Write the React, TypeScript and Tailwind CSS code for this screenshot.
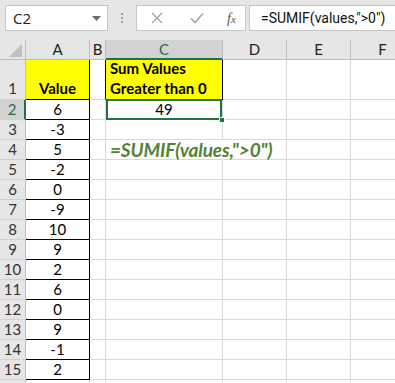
import React from "react";

const GRID = "border-[#d9d9d9]";

function XIcon() {
  return (
    <svg width="12" height="12" viewBox="0 0 12 12">
      <path d="M1 1 L11 11 M11 1 L1 11" stroke="#a6a6a6" strokeWidth="1.4" fill="none" />
    </svg>
  );
}
function CheckIcon() {
  return (
    <svg width="14" height="12" viewBox="0 0 14 12">
      <path d="M1 6.5 L5 10.5 L13 1.5" stroke="#a6a6a6" strokeWidth="1.6" fill="none" />
    </svg>
  );
}

const values = [6, -3, 5, -2, 0, -9, 10, 9, 2, 6, 0, 9, -1, 2];

export default function App() {
  const font = { fontFamily: "Lato, 'Liberation Sans', sans-serif" };
  const rows: React.ReactNode[] = [];

  rows.push(
    <React.Fragment key="h">
      <div className="relative h-[20px] border-r border-b border-[#bdbdbd] bg-[#e6e6e6]">
        <svg className="absolute left-[9px] top-[4px]" width="14" height="14" viewBox="0 0 14 14">
          <polygon points="13,0 13,13 0,13" fill="#bfbfbf" />
        </svg>
      </div>
      {["A", "B", "C", "D", "E", "F"].map((c) => (
        <div
          key={c}
          className={
            c === "C"
              ? "flex h-[20px] items-center justify-center border-r border-b-2 border-r-[#bdbdbd] border-b-[#217346] bg-[#d2d2d2] text-[15px] text-[#217346]"
              : "flex h-[20px] items-center justify-center border-r border-b border-[#bdbdbd] bg-[#e6e6e6] text-[15px] text-[#222]"
          }
        >
          {c}
        </div>
      ))}
    </React.Fragment>
  );

  rows.push(
    <React.Fragment key="r1">
      <div className="flex h-[40px] items-end justify-center border-r border-b border-r-[#bdbdbd] border-b-[#d0d0d0] bg-[#e6e6e6] pb-[1px] text-[15px] leading-[19px] text-[#333]">
        1
      </div>
      <div className="flex h-[40px] items-end justify-center border-r border-b border-black bg-[#ffff00] pb-[1px] text-[15px] font-bold leading-[19px] text-black">
        Value
      </div>
      <div className="h-[40px] border-r border-b border-r-black border-b-[#d9d9d9]" />
      <div className="flex h-[40px] flex-col justify-end border-r border-b border-black bg-[#ffff00] pb-[1px] pl-[4px] text-[15px] font-bold leading-[20px] text-black">
        <span>Sum Values</span>
        <span>Greater than 0</span>
      </div>
      <div className={`h-[40px] border-r border-b ${GRID}`} />
      <div className={`h-[40px] border-r border-b ${GRID}`} />
      <div className={`h-[40px] border-r border-b ${GRID}`} />
    </React.Fragment>
  );

  values.forEach((v, i) => {
    const r = i + 2;
    const sel = r === 2;
    rows.push(
      <React.Fragment key={r}>
        <div
          className={
            sel
              ? "flex h-[20px] items-center justify-center border-r-2 border-b border-r-[#217346] border-b-[#d0d0d0] bg-[#d2d2d2] text-[15px] leading-[19px] text-[#217346]"
              : "flex h-[20px] items-center justify-center border-r border-b border-r-[#bdbdbd] border-b-[#d0d0d0] bg-[#e6e6e6] text-[15px] leading-[19px] text-[#333]"
          }
        >
          {r}
        </div>
        <div className="flex h-[20px] items-center justify-center border-r border-b border-black text-[15px] leading-[19px] text-black">
          {v}
        </div>
        <div className={`h-[20px] border-r border-b ${GRID}`} />
        {r === 2 ? (
          <div className={`relative flex h-[20px] items-center justify-center border-r border-b ${GRID} text-[15px] leading-[19px] text-black`}>
            49
            <div className="pointer-events-none absolute left-0 right-0 top-[-1px] bottom-[-1px] border-2 border-[#217346]" />
            <div className="absolute right-[-3px] bottom-[-4px] h-[6px] w-[6px] border border-white bg-[#217346]" />
          </div>
        ) : r === 4 ? (
          <div className={`col-span-2 flex h-[20px] items-center whitespace-nowrap border-r border-b ${GRID} pl-[4px] text-[19px] font-bold italic leading-[19px] tracking-[-0.15px] text-[#548235]`}>
            =SUMIF(values,"&gt;0")
          </div>
        ) : (
          <div className={`h-[20px] border-r border-b ${GRID}`} />
        )}
        {r !== 4 && <div className={`h-[20px] border-r border-b ${GRID}`} />}
        <div className={`h-[20px] border-r border-b ${GRID}`} />
        <div className={`h-[20px] border-r border-b ${GRID}`} />
      </React.Fragment>
    );
  });

  rows.push(
    <React.Fragment key="r16">
      <div className="h-[20px] border-r border-b border-r-[#bdbdbd] border-b-[#d0d0d0] bg-[#e6e6e6]" />
      <div className={`h-[20px] border-r border-b ${GRID}`} />
      <div className={`h-[20px] border-r border-b ${GRID}`} />
      <div className={`h-[20px] border-r border-b ${GRID}`} />
      <div className={`h-[20px] border-r border-b ${GRID}`} />
      <div className={`h-[20px] border-r border-b ${GRID}`} />
      <div className={`h-[20px] border-r border-b ${GRID}`} />
    </React.Fragment>
  );

  return (
    <div className="h-[383px] w-[395px] overflow-hidden bg-white" style={font}>
      <div className="flex h-[40px] items-start bg-[#e6e6e6] pt-[5px]">
        <div className="ml-[5px] flex h-[26px] w-[103px] items-center justify-between border border-[#c6c6c6] bg-white pl-[7px] pr-[6px]">
          <span className="text-[15px] text-[#222]" style={{ fontFamily: "'Open Sans', sans-serif" }}>
            C2
          </span>
          <svg width="9" height="5" viewBox="0 0 9 5">
            <polygon points="0,0 9,0 4.5,5" fill="#6d6d6d" />
          </svg>
        </div>
        <div className="ml-[13px] mt-[8px] flex flex-col gap-[2px]">
          <div className="h-[2px] w-[2px] bg-[#a0a0a0]" />
          <div className="h-[2px] w-[2px] bg-[#a0a0a0]" />
          <div className="h-[2px] w-[2px] bg-[#a0a0a0]" />
        </div>
        <div className="ml-[13px] flex h-[26px] w-[110px] items-center border border-[#c6c6c6] bg-white">
          <span className="ml-[14px]"><XIcon /></span>
          <span className="ml-[27px]"><CheckIcon /></span>
          <span
            className="ml-[23px] text-[14px] italic text-[#555]"
            style={{ fontFamily: "'Liberation Serif', serif" }}
          >
            f<span className="text-[11px]">x</span>
          </span>
        </div>
        <div className="ml-[3px] flex h-[26px] flex-1 items-center border border-r-0 border-[#c6c6c6] bg-white pl-[11px]">
          <span className="text-[14px] text-[#111]" style={{ fontFamily: "Roboto, sans-serif" }}>
            =SUMIF(values,"&gt;0")
          </span>
        </div>
      </div>
      <div className="grid grid-cols-[26px_64px_16px_117px_64px_64px_64px]">{rows}</div>
    </div>
  );
}
